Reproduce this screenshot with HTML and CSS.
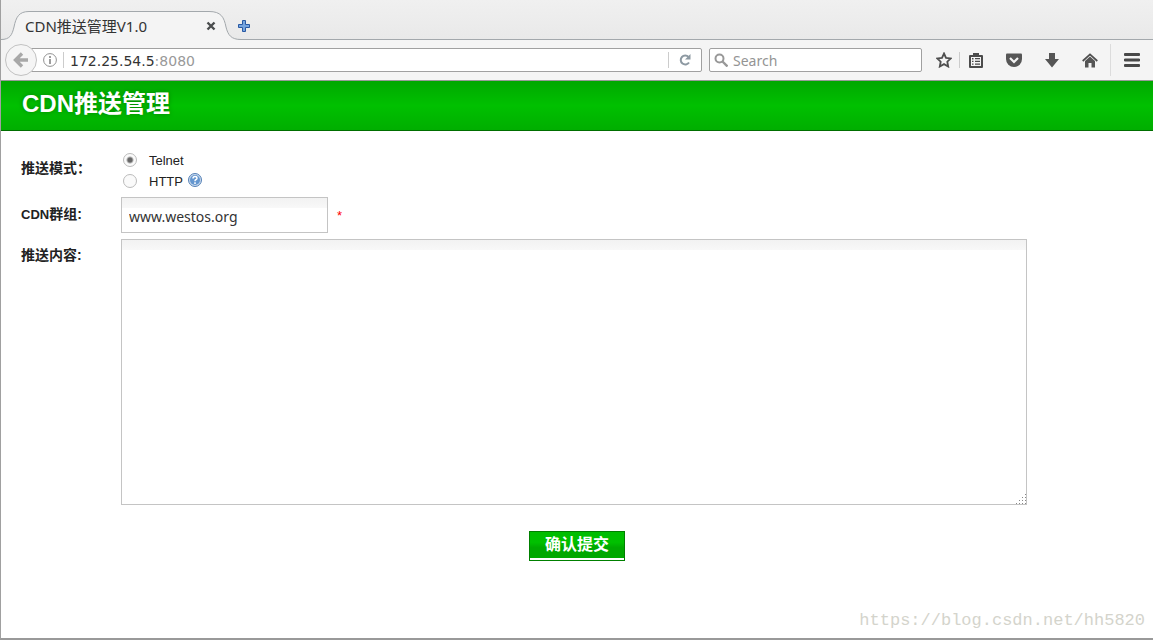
FILE: index.html
```html
<!DOCTYPE html>
<html lang="zh-CN">
<head>
<meta charset="utf-8">
<title>CDN推送管理V1.0</title>
<link rel="stylesheet" href="styles.css">
</head>
<body>
<div class="window">
  <div class="tabbar">
    <div class="tab">
      <svg class="tab-shape" width="240" height="30" viewBox="0 0 240 30" aria-hidden="true"><path d="M0 30V28.500C9 28.500 11 24 13 16C15 6 18 .5 28 .5H208C220 .5 223 6 225 16C227 24 230 28.500 240 28.500V30Z" fill="#f4f4f4"/><path d="M0 28.500C9 28.500 11 24 13 16C15 6 18 .5 28 .5H208C220 .5 223 6 225 16C227 24 230 28.500 240 28.500" fill="none" stroke="#a3a8ac"/></svg>
      <span class="tab-title">CDN推送管理V1.0</span>
      <button class="plain tab-close" aria-label="Close tab"><svg width="10" height="10" viewBox="0 0 10 10"><path d="M1.500 1.500l7 7M8.500 1.500l-7 7" stroke="#4a4d4e" stroke-width="2.400"/></svg></button>
    </div>
    <button class="plain" aria-label="New tab"><svg width="12" height="12" viewBox="0 0 12 12"><path d="M4.500.5h3v4h4v3h-4v4h-3v-4h-4v-3h4z" fill="#75a4df" stroke="#2858a3"/></svg></button>
  </div>

  <div class="toolbar">
    <button class="plain back" aria-label="Back"><svg width="16" height="16" viewBox="0 0 16 16"><path d="M9 1.500L2.500 8L9 14.500M3 8h12" fill="none" stroke="#a8a8a8" stroke-width="3.400"/></svg></button>
    <div class="urlbar">
      <svg width="14" height="14" viewBox="0 0 14 14" aria-hidden="true"><circle cx="7" cy="7" r="6.400" fill="none" stroke="#929292"/><path d="M7 6v5M7 3v2" stroke="#858585" stroke-width="1.600"/></svg>
      <span class="divider"></span>
      <span class="address">172.25.54.5<span class="port">:8080</span></span>
      <span class="divider"></span>
      <button class="plain reload" aria-label="Reload"><svg width="12" height="12" viewBox="0 0 12 12"><path d="M9.500 2.900A4.500 4.500 0 1 0 10 8.500" fill="none" stroke="#8d99a2" stroke-width="2"/><path d="M11.500 0v5.500H6z" fill="#8d99a2"/></svg></button>
    </div>
    <div class="search">
      <svg width="14" height="14" viewBox="0 0 14 14" aria-hidden="true"><circle cx="5.500" cy="5.500" r="4" fill="none" stroke="#989898" stroke-width="2"/><path d="M8.500 8.500l5 5" stroke="#989898" stroke-width="2.400"/></svg>
      <input class="search-input" type="text" placeholder="Search" aria-label="Search">
    </div>
    <div class="tools">
      <button class="plain tool star" aria-label="Bookmark"><svg width="16" height="16" viewBox="0 0 16 16"><path d="M8 1.500l2 4.300 4.700.600-3.400 3.300.9 4.800L8 12.100l-4.200 2.400.9-4.800L1.300 6.400 6 5.800z" fill="none" stroke="#4e4e4e" stroke-width="1.800"/></svg></button>
      <span class="divider"></span>
      <button class="plain tool list" aria-label="Bookmarks list"><svg width="14" height="15" viewBox="0 0 14 15"><path d="M1 3h12v11H1z" fill="#f4f4f4" stroke="#4b4b4b" stroke-width="2" stroke-linejoin="round"/><path d="M4 0h6v3.500H4zM3 5h1.500v1.500H3zM6 5h5v1.300H6zM3 7.700h1.500V9H3zM6 7.700h5V9H6zM3 10.400h1.500v1.300H3zM6 10.400h5v1.300H6z" fill="#4b4b4b"/></svg></button>
      <button class="plain tool" aria-label="Pocket"><svg width="16" height="15" viewBox="0 0 16 15"><path d="M1 .5h14q1 0 1 1V6a8 8 0 0 1-16 0V1.500q0-1 1-1z" fill="#565656"/><path d="M4 5l4 4 4-4" fill="none" stroke="#f4f4f4" stroke-width="2.200"/></svg></button>
      <button class="plain tool" aria-label="Downloads"><svg width="14" height="15" viewBox="0 0 14 15"><path d="M4 0h6v6h4l-7 8.500L0 6h4z" fill="#555"/></svg></button>
      <button class="plain tool" aria-label="Home"><svg width="16" height="15" viewBox="0 0 16 15"><path d="M.7 8L8 1.300 15.300 8" fill="none" stroke="#4e4e4e" stroke-width="1.700"/><path d="M3 8l5-4.500L13 8v6.500H9.500V10h-3v4.500H3z" fill="#555"/></svg></button>
      <span class="menu-divider"></span>
      <button class="plain tool menu" aria-label="Menu"><svg width="16" height="14" viewBox="0 0 16 14"><path d="M1 1.500h14M1 7h14M1 12.500h14" stroke="#484848" stroke-width="2.800" stroke-linecap="round"/></svg></button>
    </div>
  </div>

  <main class="page">
    <h1 class="banner">CDN推送管理</h1>
    <form class="form">
      <span class="label mode-label" id="mode">推送模式：</span>
      <div class="options" role="radiogroup" aria-labelledby="mode">
        <label class="option"><input class="radio" type="radio" name="mode" checked>Telnet</label>
        <label class="option"><input class="radio" type="radio" name="mode">HTTP
          <svg class="help" width="14" height="14" viewBox="0 0 14 14" aria-hidden="true"><circle cx="7" cy="7" r="6.500" fill="#c9daee" stroke="#5580b5"/><circle cx="7" cy="7" r="5" fill="#6496cf"/><path d="M5 5.400q0-1.900 2-1.900t2 1.700q0 1-1.200 1.500Q7 7.100 7 8.200M7 9.300v1.600" fill="none" stroke="#fff" stroke-width="1.500"/></svg>
        </label>
      </div>
      <label class="label group-label" for="group"><span class="latin">CDN</span>群组:</label>
      <div class="field"><input class="box group" id="group" type="text" value="www.westos.org"><span class="required">*</span></div>
      <label class="label content-label" for="content">推送内容:</label>
      <div class="content-wrap">
        <textarea class="box content" id="content"></textarea>
        <svg class="grip" width="10" height="10" viewBox="0 0 10 10" aria-hidden="true"><path d="M9 0h1v1H9zM6 3h1v1H6zM9 3h1v1H9zM3 6h1v1H3zM6 6h1v1H6zM9 6h1v1H9zM0 9h1v1H0zM3 9h1v1H3zM6 9h1v1H6zM9 9h1v1H9z" fill="#888"/></svg>
      </div>
      <div class="actions"><button class="submit" type="submit">确认提交</button></div>
    </form>
    <p class="watermark">https://blog.csdn.net/hh5820</p>
  </main>
</div>
</body>
</html>
```
FILE: styles.css
```css
* { box-sizing: border-box; }

body {
  margin: 0;
  background: #fff;
  color: #222;
  font-family: "Liberation Sans", "Noto Sans CJK SC", sans-serif;
  font-size: 13px;
}

.window {
  display: flex;
  flex-direction: column;
  min-height: 100vh;
  border-left: 1px solid #a0a0a0;
  border-bottom: 2px solid #999;
}

.plain {
  display: flex;
  align-items: center;
  justify-content: center;
  padding: 0;
  border: 0;
  background: none;
}

svg { flex: none; }

/* Browser tabs */
.tabbar {
  display: flex;
  align-items: center;
  height: 40px;
  padding-top: 12px;
  border-bottom: 1px solid #a3a8ac;
  background: linear-gradient(#f0f0f0, #e9e9e9);
}

.tab {
  position: relative;
  display: flex;
  align-items: center;
  width: 237px;
  height: 30px;
  padding: 0 22px 0 24px;
  font-family: "Noto Sans", "Noto Sans CJK SC", sans-serif;
  font-size: 15px;
  color: #333;
}

.tab-shape { position: absolute; left: 0; top: 0; }
.tab-title { position: relative; flex: 1; }
.tab-close { position: relative; }

/* Address bar row */
.toolbar {
  display: flex;
  align-items: center;
  height: 41px;
  padding: 0 4px;
  border-bottom: 1px solid #999;
  background: #f4f4f4;
}

.back {
  position: relative;
  z-index: 1;
  width: 32px;
  height: 32px;
  margin-right: -8px;
  border: 1px solid #c2c2c2;
  border-radius: 50%;
  background: #f5f5f5;
}

.urlbar, .search {
  display: flex;
  align-items: center;
  height: 24px;
  border: 1px solid #a0a0a0;
  border-radius: 2px;
  background: #fff;
}

.urlbar {
  flex: 1;
  gap: 6px;
  padding-left: 13px;
}

.divider {
  width: 1px;
  height: 16px;
  background: #ccc;
}

.address {
  flex: 1;
  font-family: "DejaVu Sans", sans-serif;
  font-size: 14px;
  line-height: 20px;
  padding-top: 2px;
  color: #333;
}

.port { color: #999; }
.reload { width: 20px; margin-right: 6px; }

.search {
  width: 213px;
  margin-left: 7px;
  padding: 0 4px;
  gap: 5px;
}

.search-input {
  flex: 1;
  min-width: 0;
  padding: 0;
  border: 0;
  background: none;
  font-family: "Noto Sans", sans-serif;
  font-size: 14px;
}

.search-input::placeholder { color: #949494; }

.tools {
  display: flex;
  align-items: center;
  height: 100%;
}

.tool { width: 38px; }
.star { width: 30px; margin-left: 7px; }
.list { width: 32px; margin-right: 3px; }
.menu { width: 34px; margin-left: 4px; }

.menu-divider {
  width: 1px;
  height: 32px;
  margin-left: 1px;
  background: #dcdcdc;
}

/* Page */
.page {
  display: flex;
  flex: 1;
  flex-direction: column;
}

.banner {
  height: 50px;
  margin: 0;
  padding-left: 21px;
  border-bottom: 1px solid #006e00;
  background: linear-gradient(#00a800, #00c000 50%, #00ae00);
  color: #fff;
  font-size: 24px;
  line-height: 46px;
  text-shadow: 0 0 5px #008000;
}

.form {
  display: grid;
  grid-template-columns: 100px 1fr;
  align-items: start;
  row-gap: 6px;
  padding: 19px 126px 0 20px;
}

.label {
  font-size: 14px;
  font-weight: bold;
  line-height: 20px;
}

.latin { font-size: 13px; }
.mode-label { padding-top: 8px; }
.group-label { padding-top: 7px; }
.content-label { padding-top: 6px; }

.options { height: 41px; }

.option {
  display: flex;
  align-items: center;
  height: 21px;
  color: #222;
}

.radio {
  appearance: none;
  width: 14px;
  height: 14px;
  margin: 0 12px 2px 2px;
  border: 1px solid #bbb;
  border-radius: 50%;
  background: #fafafa;
}

.radio:checked {
  background: radial-gradient(circle, #666 2px, #fafafa 4px);
}

.help { margin: 0 0 4px 5px; }

.field {
  display: flex;
  align-items: center;
  gap: 9px;
}

.box {
  display: block;
  border: 1px solid #c4c4c4;
  border-radius: 0;
  background: linear-gradient(#f2f2f2, #f8f8f8 10px, #fff 10px);
  color: #333;
  font-family: "Noto Sans", sans-serif;
  font-size: 14px;
}

.group {
  width: 207px;
  height: 36px;
  padding: 3px 7px 0;
}

.required { color: #f00; }
.content-wrap { position: relative; }

.content {
  width: 100%;
  height: 266px;
  resize: none;
}

.grip {
  position: absolute;
  right: 1px;
  bottom: 1px;
}

.actions {
  grid-column: 2;
  padding: 20px 0 0 408px;
}

.submit {
  width: 96px;
  height: 30px;
  padding: 0 0 6px;
  border: 1px solid #008000;
  background: linear-gradient(#00bd00, #00c000 40%, #00a800 60%, #00a800) top / 100% 26px no-repeat #fff;
  color: #fff;
  font-family: "Noto Sans CJK SC", sans-serif;
  font-size: 16px;
  font-weight: bold;
  line-height: 22px;
}

.watermark {
  margin: auto 8px 8px auto;
  color: #d4d4cc;
  font-family: "Liberation Mono", monospace;
  font-size: 17px;
}
```
